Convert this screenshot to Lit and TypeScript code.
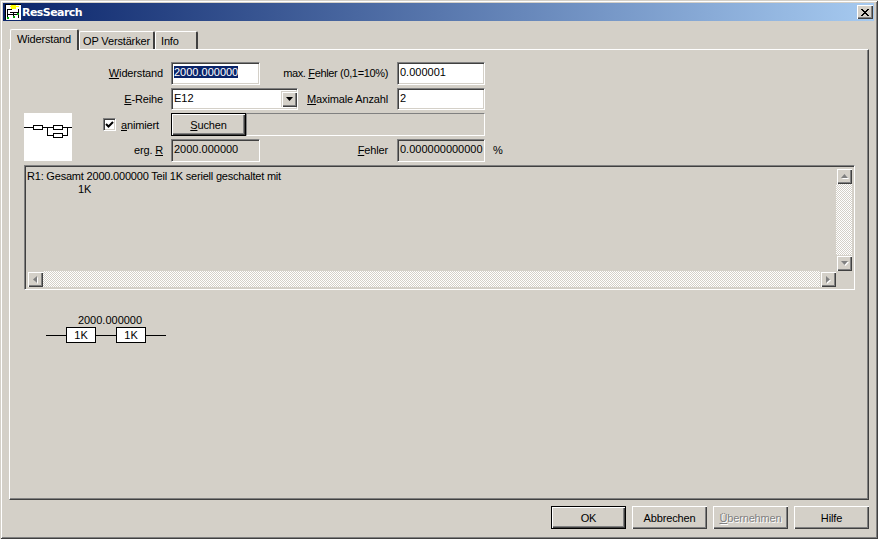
import { LitElement, html, css } from "lit";
import { customElement } from "lit/decorators.js";

@customElement("app-root")
export class AppRoot extends LitElement {
  static styles = css`
    :host { display: block; width: 878px; height: 539px; font: 11px "Liberation Sans", Arial, sans-serif; letter-spacing: -0.15px; color: #000; }
    * { box-sizing: border-box; }
    u { text-decoration: underline; text-underline-offset: 1px; }
    .win { width: 878px; height: 539px; background: #d4d0c8; padding: 3px 4px 4px 3px; display: flex; flex-direction: column;
      box-shadow: inset 1px 1px 0 #d4d0c8, inset -1px -1px 0 #404040, inset 2px 2px 0 #fff, inset -2px -2px 0 #808080; }
    .title { height: 18px; flex: none; background: linear-gradient(90deg, #0a246a, #a6caf0); display: flex; align-items: center; padding: 0 1px 0 2px; color: #fff; font: bold 11px "DejaVu Sans", sans-serif; letter-spacing: -0.55px; gap: 1px; }
    .title span { flex: 1; }
    .ticon { width: 16px; height: 16px; display: block; }
    .close { width: 16px; height: 14px; background: #d4d0c8; box-shadow: inset 1px 1px 0 #fff, inset -1px -1px 0 #404040, inset -2px -2px 0 #808080; display: flex; align-items: center; justify-content: center; }
    .body { flex: 1; display: flex; flex-direction: column; padding: 9px 5px 6px 6px; min-height: 0; }
    .tabs { display: flex; height: 20px; flex: none; padding-left: 1px; align-items: flex-end; position: relative; z-index: 1; margin-bottom: -1px; }
    .tab { height: 18px; padding-top: 3px; border: 1px solid #fff; border-bottom: 0; border-right: 2px solid #404040; border-radius: 2px 2px 0 0; text-align: center; margin-bottom: 1px; }
    .tab.t2 { width: 76px; }
    .tab.t3 { width: 43px; text-align: left; padding-left: 5px; }
    .tab.active { width: 69px; height: 21px; margin-bottom: 0; padding-top: 3px; background: #d4d0c8; border-right-color: #404040; position: relative; }
    .panel { flex: 1; min-height: 0; border: 1px solid; border-color: #fff #404040 #404040 #fff; box-shadow: inset -1px -1px 0 #808080; padding: 12px 0 0 14px; display: flex; flex-direction: column; }
    .grid { display: grid; grid-template-columns: 48px 99px 89px 137px 88px auto; grid-template-rows: 23px 22px 23px 23px; row-gap: 3px; width: 520px; }
    .l { display: flex; align-items: center; justify-content: flex-end; padding: 0 8px 1px 0; white-space: nowrap; }
    .l2 { padding-right: 9px; }
    .tight { letter-spacing: -0.35px; }
    .sunken { border: 1px solid; border-color: #808080 #fff #fff #808080; box-shadow: inset 1px 1px 0 #404040, inset -1px -1px 0 #d4d0c8; padding: 2px 0 0 2px; background: #fff; white-space: nowrap; overflow: hidden; line-height: 15px; letter-spacing: 0; }
    .sunken.ro { background: #d4d0c8; }
    .sel { background: #0a246a; color: #fff; }
    .c1 { grid-column: 2; }
    .c2 { grid-column: 3; }
    .c3 { grid-column: 4; }
    .c4 { grid-column: 5; }
    .c5 { grid-column: 6; padding: 0 0 2px 8px; display: flex; align-items: center; }
    .r4 { grid-row: 4; }
    .row2 { grid-column: 3 / span 3; display: flex; }
    .row2 .l { flex: 1; }
    .combo { width: 127px; position: relative; flex: none; }
    .row2 .in { width: 88px; flex: none; }
    .drop { position: absolute; right: 0; top: 2px; width: 16px; height: 16px; background: #d4d0c8; box-shadow: inset 1px 1px 0 #d4d0c8, inset 2px 2px 0 #fff, inset -1px -1px 0 #404040, inset -2px -2px 0 #808080; display: flex; align-items: center; justify-content: center; }
    .pic { grid-column: 1; grid-row: 3 / span 2; height: 48px; background: #fff; display: block; }
    .anim { grid-column: 2; grid-row: 3; display: flex; align-items: center; gap: 5px; padding-left: 31px; }
    .cb { width: 13px; height: 13px; background: #fff; border: 1px solid; border-color: #808080 #fff #fff #808080; box-shadow: inset 1px 1px 0 #404040, inset -1px -1px 0 #d4d0c8; display: flex; align-items: center; justify-content: center; }
    .find { grid-column: 3 / span 3; grid-row: 3; display: flex; }
    .btn { width: 75px; height: 23px; background: #d4d0c8; display: flex; align-items: center; justify-content: center; box-shadow: inset 1px 1px 0 #fff, inset -1px -1px 0 #404040, inset -2px -2px 0 #808080; flex: none; }
    .btn.def { box-shadow: inset 0 0 0 1px #000, inset 2px 2px 0 #fff, inset -2px -2px 0 #404040, inset -3px -3px 0 #808080; }
    .btn.dis { color: #808080; text-shadow: 1px 1px 0 #fff; }
    .frame { flex: 1; border: 1px solid; border-color: #808080 #fff #fff #808080; }
    .memo { width: 831px; height: 125px; margin: 3px 0 0 0; flex: none; border: 1px solid; border-color: #808080 #fff #fff #808080; box-shadow: inset 1px 1px 0 #404040, inset -1px -1px 0 #d4d0c8; padding: 2px; display: grid; grid-template-columns: 1fr 16px; grid-template-rows: 1fr 16px; }
    .text { padding: 2px 0 0 0; line-height: 13px; white-space: nowrap; overflow: hidden; letter-spacing: -0.2px; }
    .ind { padding-left: 51px; }
    .sb { display: flex; background-image: conic-gradient(#fff 25%, #d4d0c8 0 50%, #fff 0 75%, #d4d0c8 0); background-size: 2px 2px; justify-content: space-between; }
    .sb.v { flex-direction: column; }
    .sbtn { width: 16px; height: 16px; flex: none; background: #d4d0c8; box-shadow: inset 1px 1px 0 #d4d0c8, inset 2px 2px 0 #fff, inset -1px -1px 0 #404040, inset -2px -2px 0 #808080; display: flex; align-items: center; justify-content: center; }
    .sbtn svg { overflow: visible; filter: drop-shadow(1px 1px 0 #fff); }
    .diagram { margin: 24px 0 0 22px; width: 120px; display: flex; flex-direction: column; align-items: center; letter-spacing: 0; }
    .dlabel { line-height: 12px; padding: 0 0 1px 8px; }
    .chain { display: flex; align-items: center; width: 120px; height: 16px; }
    .wire { flex: 1; height: 1px; background: #000; }
    .res { width: 30px; height: 16px; background: #fff; border: 1px solid #000; display: flex; align-items: center; justify-content: center; }
    .foot { flex: none; display: flex; justify-content: flex-end; gap: 6px; padding: 6px 0 0 0; height: 29px; }
  `;
  tri(d: string, c = "#000") {
    const pts: Record<string, string> = { d: "0,0 7,0 3.5,4", u: "0,4 7,4 3.5,0", l: "4,0 4,7 0,3.5", r: "0,0 0,7 4,3.5" };
    const side = d === "l" || d === "r";
    return html`<svg width=${side ? 4 : 7} height=${side ? 7 : 4} viewBox=${side ? "0 0 4 7" : "0 0 7 4"}><polygon points=${pts[d]} fill=${c}></polygon></svg>`;
  }
  render() {
    return html`<div class="win">
      <div class="title">
        <svg class="ticon" viewBox="0 0 16 16" shape-rendering="crispEdges">
          <rect width="16" height="16" fill="#fff"/>
          <path d="M0 .5h16M.5 0v16M2 10.5h12M2.5 5v9M13.5 5v9M3 5.5h4M5 8.5h8M8.5 8v6" stroke="#000" fill="none"/>
          <path d="M5 2.5h9" stroke="#ff0" fill="none"/>
          <rect x="6" y="1" width="5" height="4" fill="#ff0" stroke="none"/>
          <rect x="2" y="13" width="2" height="2" fill="#0a0"/>
          <rect x="8" y="12" width="2" height="2" fill="#0a0"/>
          <rect x="12" y="9" width="2" height="2" fill="#0a0"/>
        </svg>
        <span>ResSearch</span>
        <div class="close"><svg width="8" height="7" viewBox="0 0 8 7"><path d="M0 0L7 7M1 0L8 7M7 0L0 7M8 0L1 7" stroke="#000" fill="none"/></svg></div>
      </div>
      <div class="body">
        <div class="tabs">
          <div class="tab active">Widerstand</div>
          <div class="tab t2">OP Verstärker</div>
          <div class="tab t3">Info</div>
        </div>
        <div class="panel">
          <div class="grid">
            <div class="l c1"><span><u>W</u>iderstand</span></div>
            <div class="sunken c2"><span class="sel">2000.000000</span></div>
            <div class="l l2 c3"><span class="tight">max. <u>F</u>ehler (0,1=10%)</span></div>
            <div class="sunken c4">0.000001</div>

            <div class="l c1"><span><u>E</u>-Reihe</span></div>
            <div class="row2">
              <div class="combo sunken">E12<div class="drop">${this.tri("d")}</div></div>
              <div class="l l2"><span><u>M</u>aximale Anzahl</span></div>
              <div class="sunken in">2</div>
            </div>

            <svg class="pic" viewBox="0 0 48 48" shape-rendering="crispEdges">
              <path d="M0 14.5h9M18 14.5h11M39 14.5h9M23.5 14v9M43.5 14v9M23 22.5h6M39 22.5h5" stroke="#000" fill="none"/>
              <rect x="9.5" y="12.5" width="9" height="4" fill="#fff" stroke="#000"/>
              <rect x="29.5" y="12.5" width="9" height="4" fill="#fff" stroke="#000"/>
              <rect x="29.5" y="20.5" width="9" height="4" fill="#fff" stroke="#000"/>
            </svg>
            <div class="anim"><div class="cb"><svg width="9" height="9" viewBox="0 0 9 9"><path d="M1 4L3.5 6.5L8 2" stroke="#000" stroke-width="2" fill="none"/></svg></div><span><u>a</u>nimiert</span></div>
            <div class="find"><div class="btn def"><span><u>S</u>uchen</span></div><div class="frame"></div></div>

            <div class="l c1 r4"><span>erg. <u>R</u></span></div>
            <div class="sunken ro c2 r4">2000.000000</div>
            <div class="l l2 c3 r4"><span><u>F</u>ehler</span></div>
            <div class="sunken ro c4 r4">0.000000000000</div>
            <div class="c5 r4">%</div>
          </div>
          <div class="memo">
            <div class="text">R1: Gesamt 2000.000000 Teil 1K seriell geschaltet mit<div class="ind">1K</div></div>
            <div class="sb v"><div class="sbtn">${this.tri("u", "#808080")}</div><div class="sbtn">${this.tri("d", "#808080")}</div></div>
            <div class="sb"><div class="sbtn">${this.tri("l", "#808080")}</div><div class="sbtn">${this.tri("r", "#808080")}</div></div>
            <div></div>
          </div>
          <div class="diagram">
            <div class="dlabel">2000.000000</div>
            <div class="chain"><div class="wire"></div><div class="res">1K</div><div class="wire"></div><div class="res">1K</div><div class="wire"></div></div>
          </div>
        </div>
        <div class="foot">
          <div class="btn def">OK</div>
          <div class="btn">Abbrechen</div>
          <div class="btn dis"><span><u>Ü</u>bernehmen</span></div>
          <div class="btn">Hilfe</div>
        </div>
      </div>
    </div>`;
  }
}
